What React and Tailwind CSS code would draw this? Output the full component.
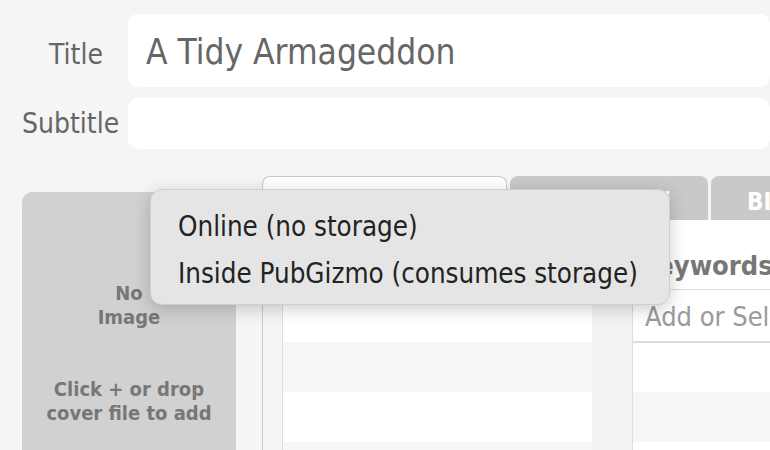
import React from "react";

const face = { fontFamily: '"DejaVu Sans Condensed", "DejaVu Sans", Tahoma, sans-serif' };

const Field = ({ label, value, pad, height }) => (
  <div className="flex items-center">
    <div className={`w-[106px] shrink-0 text-right text-[28px] text-[#666] ${pad}`}>{label}</div>
    <div className={`flex-1 flex items-center rounded-[10px] bg-white pl-[18px] pt-[3px] ${height}`}>
      <span className="text-[35px] text-[#666] leading-none">{value}</span>
    </div>
  </div>
);

const CoverDrop = () => (
  <div className="mt-[16px] w-[214px] shrink-0 rounded-t-[10px] bg-[#d1d1d1] flex flex-col items-center pt-[89px] text-center font-bold text-[20px] leading-[24px] text-[#777]">
    <div>No<br />Image</div>
    <div className="mt-[48px]">Click + or drop<br />cover file to add</div>
  </div>
);

const Tabs = () => (
  <div className="flex h-[44px] items-end gap-[3px]">
    <div className="h-[44px] w-[245px] shrink-0 rounded-t-[8px] border border-b-0 border-[#c9c9d9] bg-white" />
    <div className="h-[44px] w-[198px] shrink-0 rounded-t-[8px] bg-[#c9c9c9] flex items-center justify-end pt-[7px] pr-[37px] font-bold text-[24px] text-white whitespace-nowrap overflow-hidden">
      Links &amp; Wiki
    </div>
    <div className="h-[44px] flex-1 rounded-tl-[8px] bg-[#c9c9c9] flex items-center pt-[7px] pl-[36px] font-bold text-[24px] text-white whitespace-nowrap overflow-hidden">
      BISAC
    </div>
  </div>
);

const ListColumn = () => (
  <div className="flex w-[330px] shrink-0 border-l border-[#c9c9d9]">
    <div className="w-[20px] shrink-0 border-r border-[#dcdcdc] bg-[#f5f5f5]" />
    <div className="flex-1 flex flex-col">
      <div className="h-[122px] bg-white" />
      <div className="h-[50px] bg-[#f6f6f6]" />
      <div className="h-[50px] bg-white" />
      <div className="h-[50px] bg-[#f6f6f6]" />
    </div>
  </div>
);

const KeywordsPanel = () => (
  <div className="flex-1 min-w-0 flex flex-col bg-white">
    <div className="h-[70px] flex items-end pb-[3px] pl-[6px] border-b border-[#dcdcdc] font-bold text-[27px] text-[#777] whitespace-nowrap overflow-hidden">
      Keywords
    </div>
    <div className="h-[53px] flex items-center pl-[12px] pt-[3px] border-b-2 border-[#dcdcdc] text-[27px] text-[#9a9a9a] whitespace-nowrap overflow-hidden">
      Add or Select
    </div>
    <div className="h-[49px] bg-white" />
    <div className="h-[50px] bg-[#f6f6f6]" />
    <div className="h-[50px] bg-white" />
  </div>
);

const StorageMenu = () => (
  <div className="absolute left-[150px] top-[189px] w-[520px] rounded-[12px] border border-[#cfcfcf] bg-[#e5e5e5] pt-[13px] pb-[7px] pl-[27px] shadow-[0_4px_18px_rgba(0,0,0,0.2)] text-[27.5px] text-[#222]">
    <div className="h-[47px] flex items-center">Online (no storage)</div>
    <div className="h-[47px] flex items-center">Inside PubGizmo (consumes storage)</div>
  </div>
);

export default function App() {
  return (
    <div style={face} className="relative h-[450px] w-[770px] overflow-hidden bg-[#f5f5f5]">
      <div className="pl-[22px] pt-[14px] flex flex-col gap-[11px]">
        <Field label="Title" value="A Tidy Armageddon" pad="pr-[25px] pt-[8px]" height="h-[73px]" />
        <Field label="Subtitle" value="" pad="pr-[15px]" height="h-[51px]" />
      </div>

      <div className="mt-[27px] flex pl-[22px] gap-[26px] h-[274px]">
        <CoverDrop />
        <div className="flex-1 min-w-0 flex flex-col">
          <Tabs />
          <div className="flex flex-1">
            <ListColumn />
            <div className="w-[41px] shrink-0 border-r border-[#dcdcdc] bg-[#f3f3f3]" />
            <KeywordsPanel />
          </div>
        </div>
      </div>

      <StorageMenu />
    </div>
  );
}
